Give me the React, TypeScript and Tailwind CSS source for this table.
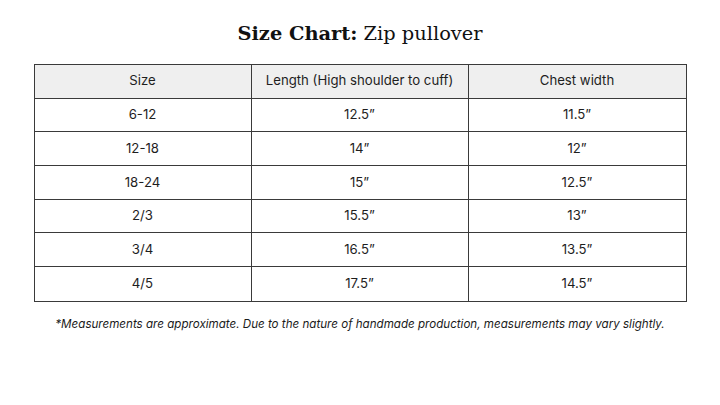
import React from "react";

const rows = [
  ["6-12", "12.5\u201d", "11.5\u201d"],
  ["12-18", "14\u201d", "12\u201d"],
  ["18-24", "15\u201d", "12.5\u201d"],
  ["2/3", "15.5\u201d", "13\u201d"],
  ["3/4", "16.5\u201d", "13.5\u201d"],
  ["4/5", "17.5\u201d", "14.5\u201d"],
];

export default function App() {
  return (
    <div className="w-[720px] h-[405px] bg-white flex flex-col items-center" style={{ fontFamily: "Inter, 'Liberation Sans', sans-serif" }}>
      <h1 className="mt-[19px] h-[30px] text-[19.4px] leading-[30px] text-[#111]" style={{ fontFamily: "'DejaVu Serif', 'Liberation Serif', serif" }}>
        <span className="font-bold">Size Chart:</span> Zip pullover
      </h1>
      <div className="mt-[15px] w-[653px] border border-[#3a3a3a] text-[13.2px] text-[#1e1e1e]">
        <div className="grid grid-cols-3 h-[33.7px] bg-[#efefef] border-b border-[#3a3a3a]">
          <div className="flex items-center justify-center border-r border-[#3a3a3a]">Size</div>
          <div className="flex items-center justify-center border-r border-[#3a3a3a]">Length (High shoulder to cuff)</div>
          <div className="flex items-center justify-center">Chest width</div>
        </div>
        {rows.map((r, i) => (
          <div key={i} className={`grid grid-cols-3 h-[33.7px] ${i < rows.length - 1 ? "border-b border-[#3a3a3a]" : ""}`}>
            <div className="flex items-center justify-center border-r border-[#3a3a3a]">{r[0]}</div>
            <div className="flex items-center justify-center border-r border-[#3a3a3a]">{r[1]}</div>
            <div className="flex items-center justify-center">{r[2]}</div>
          </div>
        ))}
      </div>
      <p className="mt-[14px] text-[11.6px] italic text-[#1a1a1a]">
        *Measurements are approximate. Due to the nature of handmade production, measurements may vary slightly.
      </p>
    </div>
  );
}
